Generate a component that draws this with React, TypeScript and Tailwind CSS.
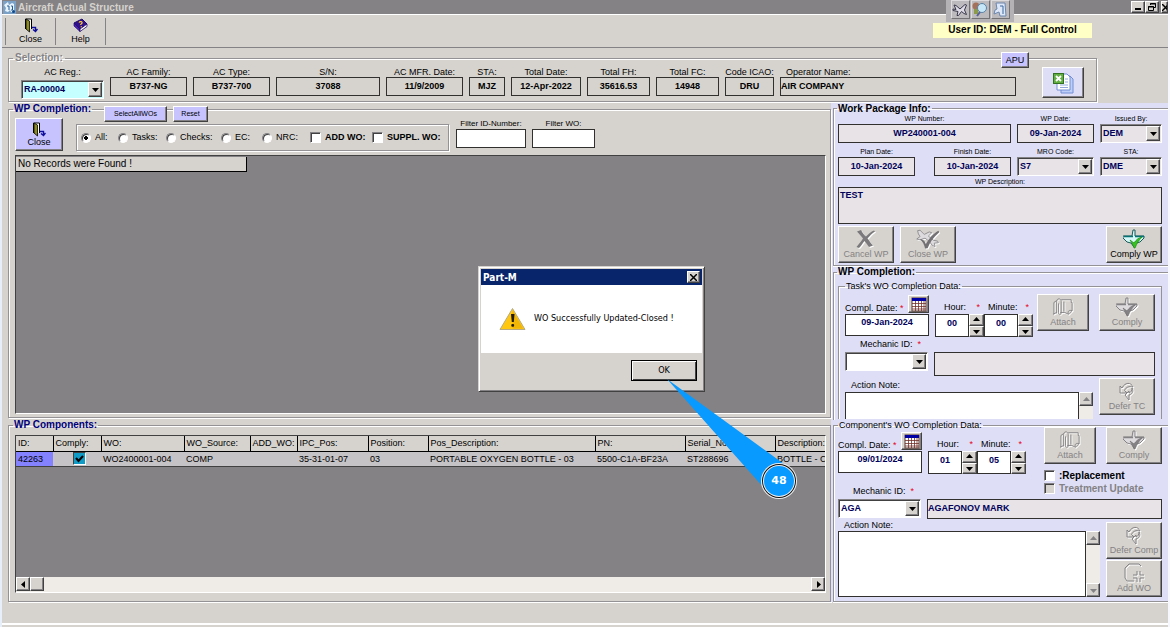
import type { ReactNode } from 'react';
import clsx from 'clsx';

const raised =
    'border border-t-white border-l-white border-b-[#424142] border-r-[#424142] shadow-[inset_-1px_-1px_0_#848284]';
const etched = 'border border-[#949294] shadow-[1px_1px_0_#fff,inset_1px_1px_0_#fff]';

/* ---------- icons ---------- */

function DoorIcon() {
    return (
        <svg width="14" height="15" viewBox="0 0 14 15" aria-hidden="true">
            <path d="M1.500 11V1h6v10" fill="#fff" stroke="#000" />
            <path d="M2 1l3.500 2v11L2 11z" fill="#8c8a21" stroke="#000" strokeWidth=".8" />
            <path d="M8 9.500h3.500V13M9 11.500l2.500 2 2-2.500" fill="none" stroke="#10109c" strokeWidth="1.400" />
        </svg>
    );
}

function BookIcon() {
    return (
        <svg width="16" height="15" viewBox="0 0 16 15" aria-hidden="true">
            <path d="M1 5l8-4 5 5-7 5z" fill="#31108c" stroke="#21086b" />
            <path d="M1 5v3l6 5.500v-2.500z" fill="#4a20b5" stroke="#21086b" strokeWidth=".7" />
            <path d="M7 11l7-5v2.500L7 13.500z" fill="#fff" stroke="#21086b" strokeWidth=".8" />
            <path d="M6 4.500c1-1.500 3.500-1 3 .5-.3.800-1.500.7-1.300 2M8.300 8.300v1" fill="none" stroke="#ffce31" strokeWidth="1.300" />
        </svg>
    );
}

function CalendarIcon() {
    return (
        <svg width="16" height="15" viewBox="0 0 16 15" aria-hidden="true">
            <rect x="1" y="1" width="14" height="13" fill="#fff" stroke="#5a3831" />
            <rect x="1" y="1" width="14" height="3" fill="#0000a5" />
            <path d="M1 6.500h14M1 9.500h14M1 12h14M4.500 4v10M7.500 4v10M10.500 4v10M13 4v10" stroke="#733029" strokeWidth=".8" />
        </svg>
    );
}

function CrossIcon() {
    return (
        <svg width="22" height="20" viewBox="0 0 22 20" className="drop-shadow-[1px_1px_0_#fff]" aria-hidden="true">
            <path d="M2 2.500L6 1c1.500 3 3 5 5 6.500 2.500-2.500 5-5 8-6l1 1c-3 2-5.500 4.500-7.500 7 2 2.500 3.500 5 5.500 7l-4 1.500c-1.500-2-3-4-4.500-6-2 2.500-3.500 5-5.500 7L1.500 18C4 15 6 12.500 8 9.500 6 7 4 5 2 2.500z" fill="#7b797b" />
        </svg>
    );
}

function PlaneCheckIcon() {
    return (
        <svg width="28" height="22" viewBox="0 0 29 24" className="drop-shadow-[1px_1px_0_#fff]" aria-hidden="true">
            <path d="M2 2l3-.5 5 5 6-3 3 1-4 4 6 5 5 1 1 2-5 .5 1 4-3-1-4-5-5-4-6 2-4-1 4-3-2-3z" fill="#dedbde" stroke="#848284" />
            <path d="M6 12l4 2 2 4c4-7 8-12 15-16l1 2C21 10 17 16 14 23l-3 .5C10 19 8 15 5 13z" fill="#737173" />
        </svg>
    );
}

function ComplyIcon({ active }: { active?: boolean }) {
    return (
        <svg width="22" height="20" viewBox="0 0 22 20" className={active ? '' : 'drop-shadow-[1px_1px_0_#fff]'} aria-hidden="true">
            <path d="M10 1h2v6h9v2l-4 4-4 1-2 4-3-4-4-1-4-4V7h9z" fill={active ? '#d6f7f7' : '#dedbde'} stroke={active ? '#18595a' : '#848284'} />
            <path d="M1 7.500h9M12 7.500h9" stroke={active ? '#087173' : '#848284'} strokeWidth="1.500" />
            <path d="M7 11l4 3c2-3 4-5 8-6-3 3-5 6-7 11h-1c-1-3-2-5-4-8z" fill={active ? '#39c321' : '#848284'} stroke={active ? '#188a10' : '#737173'} strokeWidth=".7" />
        </svg>
    );
}

function AttachIcon() {
    return (
        <svg width="24" height="22" viewBox="0 0 24 22" className="drop-shadow-[1px_1px_0_#fff]" aria-hidden="true">
            <g fill="none" stroke="#848284">
                <path d="M10 3h11v3h1v9l-4 4-4-2H9" />
                <path d="M1 19l4-2M2 19V6l3-2M5 18V5c0-4 5-4 5 0v12c0 3-3 3-3 0V7M13 5v11" />
                <path d="M18 19c-1-3 0-5 4-4" />
            </g>
        </svg>
    );
}

function DeferIcon() {
    return (
        <svg width="18" height="20" viewBox="0 0 18 20" className="drop-shadow-[1px_1px_0_#fff]" aria-hidden="true">
            <g fill="none" stroke="#848284">
                <path d="M2 5v7h7L6.500 9.500C8 6 11 5 15 6c-2-5-8-5-11 1z" />
                <path d="M14 7c2 3 0 6-3 7v5l-4-5 4-4v2c2-1 3-2 3-5z" />
            </g>
        </svg>
    );
}

function AddPageIcon() {
    return (
        <svg width="22" height="20" viewBox="0 0 22 20" className="drop-shadow-[1px_1px_0_#fff]" aria-hidden="true">
            <g fill="none" stroke="#848284">
                <path d="M11 18H4l-2-3V5l4-4h10l2 2" />
                <path d="M14 8v4h-4M10 15h4v4M17 19v-4h4M21 12h-4V8" />
            </g>
        </svg>
    );
}

function ExcelIcon() {
    return (
        <svg width="22" height="22" viewBox="0 0 22 22" aria-hidden="true">
            <path d="M9 4h9l3 3v14H9z" fill="#bdcff7" stroke="#738ed6" />
            <path d="M5 2h10l3 3v13H5z" fill="#fff" stroke="#738ed6" />
            <path d="M8 13h8M8 15.500h8M13 7h3M13 10h3" stroke="#94aade" />
            <rect x="1.500" y="1.500" width="10" height="10" fill="#63ae42" stroke="#31711f" />
            <path d="M4 4l5 5M9 4L4 9" stroke="#fff" strokeWidth="1.800" />
        </svg>
    );
}

function AppIcon() {
    return (
        <svg width="13" height="13" viewBox="0 0 13 13" aria-hidden="true">
            <rect width="13" height="13" fill="#7ba2c6" />
            <path d="M1 4l4-3 1 3 3-2 2 1v8H8l-1-2-2 2-3-1 1-3z" fill="#e7f3ff" />
            <path d="M4 5h2v4M8 5h1.500v4H8" stroke="#215a94" fill="none" />
            <circle cx="10.500" cy="10.500" r="1.500" fill="#104a8c" />
        </svg>
    );
}

function WarningIcon() {
    return (
        <svg width="27" height="24" viewBox="0 0 27 24" aria-hidden="true">
            <path d="M13.500 1.500L26 22.500H1z" fill="#ffc710" stroke="#b5aa84" strokeLinejoin="round" />
            <path d="M13.500 3L24 21.500H13.500z" fill="#e7aa00" opacity=".6" />
            <path d="M12 7h3.500l-.7 8h-2z" fill="#211c10" />
            <rect x="12.300" y="17" width="2.800" height="2.800" rx="1" fill="#211c10" />
        </svg>
    );
}

/* ---------- controls ---------- */

type FieldProps = {
    label: string;
    value: string;
    className?: string;
    small?: boolean;
    align?: 'left' | 'center';
    tone?: string;
};

function Field({ label, value, className, small, align = 'center', tone = 'bg-[#d6d3ce] text-black' }: FieldProps) {
    return (
        <label className={clsx('flex min-w-0 flex-col', className)}>
            <span className={clsx('leading-[10px] whitespace-nowrap', small ? 'text-[7px]' : 'text-[9px]', align === 'left' ? 'pl-[6px] text-left' : 'text-center')}>
                {label}
            </span>
            <input
                readOnly
                defaultValue={value}
                className={clsx('h-[19px] w-full border border-[#31302f] pb-[2px] text-[9px] font-bold outline-none', align === 'center' ? 'text-center' : 'text-left', tone)}
            />
        </label>
    );
}

function Arrow({ dir }: { dir: 'up' | 'down' | 'left' | 'right' }) {
    const points = {
        up: '0,5 7,5 3.5,1',
        down: '0,2 7,2 3.5,6',
        left: '5,0 5,7 1,3.5',
        right: '2,0 2,7 6,3.5',
    };
    return (
        <svg width="7" height="7" viewBox="0 0 7 7" fill="currentColor" aria-hidden="true">
            <polygon points={points[dir]} />
        </svg>
    );
}

function Combo({ id, value, className, tone = 'bg-white' }: { id: string; value: string; className?: string; tone?: string }) {
    return (
        <div className={clsx('flex h-[19px] border border-[#848284] border-r-white border-b-white p-px shadow-[inset_1px_1px_0_#424142]', tone, className)}>
            <select id={id} defaultValue={value} className="w-0 flex-1 appearance-none bg-transparent pl-px text-[9px] font-bold text-[#00005a] outline-none">
                <option>{value}</option>
            </select>
            <span className={clsx('pointer-events-none flex w-[14px] items-center justify-center bg-[#d6d3ce]', raised)}>
                <Arrow dir="down" />
            </span>
        </div>
    );
}

function ComboField({ id, label, value, className }: { id: string; label: string; value: string; className?: string }) {
    return (
        <div className={clsx('flex flex-col', className)}>
            <label htmlFor={id} className="text-center text-[7px] leading-[10px]">{label}</label>
            <Combo id={id} value={value} tone="bg-[#e7e3e7]" />
        </div>
    );
}

function ToolButton({ icon, label, className, disabled = true }: { icon: ReactNode; label: string; className?: string; disabled?: boolean }) {
    return (
        <button
            type="button"
            disabled={disabled}
            className={clsx('flex h-[37px] flex-col items-center justify-between bg-[#d6d3ce] pt-[2px] pb-[2px] text-[9px] leading-[11px] whitespace-nowrap', raised, disabled ? 'text-[#848284]' : 'text-black', className ?? 'w-14')}
        >
            {icon}
            {label}
        </button>
    );
}

function Spinner({ label, value }: { label: string; value: string }) {
    return (
        <div className="flex h-[23px]">
            <input aria-label={label} defaultValue={value} className="w-[34px] border border-[#31302f] bg-white pb-[4px] text-center text-[9px] font-bold text-[#00005a] outline-none" />
            <div className="flex w-[15px] flex-col text-black">
                <button type="button" aria-label={label + ' up'} className={clsx('flex flex-1 items-center justify-center bg-[#d6d3ce]', raised)}><Arrow dir="up" /></button>
                <button type="button" aria-label={label + ' down'} className={clsx('flex flex-1 items-center justify-center bg-[#d6d3ce]', raised)}><Arrow dir="down" /></button>
            </div>
        </div>
    );
}

function Star() {
    return <span className="text-[#e70021]">*</span>;
}

// Date, hour and minute inputs shared by both completion forms
function CompletionTime({ id, date, hour, minute }: { id: string; date: string; hour: string; minute: string }) {
    return (
        <div className="flex items-start text-[9px] leading-[11px]">
            <div className="mr-[6px] w-[84px]">
                <div className="flex h-[20px] items-end justify-between">
                    <label htmlFor={id} className="whitespace-nowrap">Compl. Date: <Star /></label>
                    <button type="button" aria-label="Pick date" className={clsx('mb-px flex h-[18px] w-[21px] items-center justify-center bg-[#d6d3ce]', raised)}>
                        <CalendarIcon />
                    </button>
                </div>
                <input id={id} defaultValue={date} className="h-[22px] w-full border border-[#31302f] bg-white pb-[6px] text-center text-[9px] font-bold text-[#00005a] outline-none" />
            </div>
            <div className="w-[49px]">
                <div className="flex h-[20px] items-end justify-between pb-px pl-[9px] pr-[4px]"><span>Hour:</span><Star /></div>
                <Spinner label="Hour" value={hour} />
            </div>
            <div className="w-[49px]">
                <div className="flex h-[20px] items-end justify-between pb-px pl-[4px] pr-[4px]"><span>Minute:</span><Star /></div>
                <Spinner label="Minute" value={minute} />
            </div>
        </div>
    );
}

function ScrollButton({ dir }: { dir: 'up' | 'down' | 'left' | 'right' }) {
    return (
        <button type="button" aria-label={'Scroll ' + dir} className={clsx('flex h-[14px] w-[14px] shrink-0 items-center justify-center bg-[#d6d3ce]', raised, (dir === 'up' || dir === 'down') && 'text-[#848284]')}>
            <Arrow dir={dir} />
        </button>
    );
}

/* ---------- sections ---------- */

function TitleBar() {
    return (
        <header className="flex h-[14px] items-center bg-[#848284] pl-px text-[10px] font-bold text-[#d6d3ce]">
            <AppIcon />
            <h1 className="flex-1 pl-[2px] leading-[13px]">Aircraft Actual Structure</h1>
            <div className="flex overflow-hidden text-black">
                <button type="button" aria-label="Minimize" className={clsx('flex h-3 w-[14px] items-end justify-center bg-[#d6d3ce] pb-[2px]', raised)}>
                    <svg width="6" height="2" aria-hidden="true"><rect width="6" height="2" /></svg>
                </button>
                <button type="button" aria-label="Restore" className={clsx('flex h-3 w-[14px] items-center justify-center bg-[#d6d3ce]', raised)}>
                    <svg width="8" height="8" viewBox="0 0 8 8" fill="none" stroke="#000" aria-hidden="true"><path d="M2.500 2V.5h5v4H6M2 1h6M.5 3.500h5v4h-5zM0 4h6" /></svg>
                </button>
                <button type="button" aria-label="Close window" className={clsx('ml-[2px] flex h-3 w-[7px] items-center overflow-hidden bg-[#d6d3ce]', raised)}>
                    <svg width="7" height="7" viewBox="0 0 7 7" stroke="#000" strokeWidth="1.500" className="shrink-0" aria-hidden="true"><path d="M0 0l7 7M7 0L0 7" /></svg>
                </button>
            </div>
        </header>
    );
}

function Toolbar() {
    return (
        <nav className="flex h-[34px] items-center border-t border-b border-t-white border-b-[#848284] pl-[3px] text-[9px] leading-[12px]">
            <button type="button" className="flex h-[27px] w-[50px] flex-col items-center border-l border-[#848284]"><DoorIcon />Close</button>
            <button type="button" className="flex h-[27px] w-[51px] flex-col items-center border-x border-[#848284]"><BookIcon />Help</button>
        </nav>
    );
}

function QuickTools() {
    const button = 'flex h-[19px] w-[19px] items-center justify-center border border-[#dedbde] border-r-[#737173] border-b-[#737173] bg-[#bdbabd]';
    return (
        <div className="absolute top-0 right-[154px] flex h-[22px] w-[68px] justify-center gap-px bg-[#b5b2b5]">
            <button type="button" aria-label="Aircraft" className={button}>
                <svg width="16" height="15" viewBox="0 0 16 15" aria-hidden="true">
                    <path d="M2 3l2 .5 4 3.500 5-4.500 1.500.5-2 5 2 4.500-2.500-1-2.500-2-3 4H5l1-4-5-1V7l3 .5z" fill="#dedbe7" stroke="#39384a" />
                </svg>
            </button>
            <button type="button" aria-label="Search" className={button}>
                <svg width="16" height="15" viewBox="0 0 16 15" aria-hidden="true">
                    <circle cx="4" cy="4" r="3.500" fill="#a5715a" /><rect x="2" y="7" width="4" height="5" fill="#8c9a4a" />
                    <circle cx="10" cy="6" r="4.500" fill="#c6e7f7" stroke="#5a82a5" /><path d="M8 10l-3 4" stroke="#5a6194" strokeWidth="2" />
                </svg>
            </button>
            <button type="button" aria-label="Structure" className={button}>
                <svg width="14" height="15" viewBox="0 0 14 15" aria-hidden="true"><path d="M3 1h9l1 13H7l-1-4-5 2 1-4 2-1z" fill="#dee7f7" stroke="#6b86ad" /><path d="M7 4h3v6M9 11h2" stroke="#39699c" fill="none" /></svg>
            </button>
        </div>
    );
}

const aircraft = [
    { label: 'AC Family:', value: 'B737-NG', width: 'w-[77px]' },
    { label: 'AC Type:', value: 'B737-700', width: 'w-[77px]' },
    { label: 'S/N:', value: '37088', width: 'w-[104px]' },
    { label: 'AC MFR. Date:', value: '11/9/2009', width: 'w-[77px]' },
    { label: 'STA:', value: 'MJZ', width: 'w-[36px]' },
    { label: 'Total Date:', value: '12-Apr-2022', width: 'w-[70px]' },
    { label: 'Total FH:', value: '35616.53', width: 'w-[63px]' },
    { label: 'Total FC:', value: '14948', width: 'w-[63px]' },
    { label: 'Code ICAO:', value: 'DRU', width: 'w-[49px]' },
];

function Selection() {
    return (
        <div className="relative mt-1 mr-[71px] ml-[6px]">
            <fieldset className={clsx('h-[50px] min-w-0', etched)}>
                <legend className="ml-1 px-[2px] text-[10px] leading-3 font-bold text-[#848284] [text-shadow:1px_1px_0_#fff]">Selection:</legend>
                <div className="flex items-start gap-[6px] pt-[3px] pl-3">
                    <div className="flex w-[83px] flex-col gap-[3px]">
                        <label htmlFor="ac-reg" className="text-center text-[9px] leading-[10px]">AC Reg.:</label>
                        <Combo id="ac-reg" value="RA-00004" tone="bg-[#c6ffff]" />
                    </div>
                    {aircraft.map((f) => (
                        <Field key={f.label} label={f.label} value={f.value} className={f.width} />
                    ))}
                    <Field label="Operator Name:" value="AIR COMPANY" align="left" className="flex-1" />
                    <button type="button" aria-label="Export to Excel" className={clsx('mr-3 ml-[20px] flex h-[31px] w-[42px] items-center justify-center bg-[#dedff7]', raised)}>
                        <ExcelIcon />
                    </button>
                </div>
            </fieldset>
            <button type="button" className={clsx('absolute top-0 right-[68px] h-4 w-7 bg-[#c6c3ff] text-[9px] leading-3', raised)}>APU</button>
        </div>
    );
}

const checkbox = 'h-[11px] w-[11px] shrink-0 appearance-none border border-[#848284] border-r-white border-b-white shadow-[inset_1px_1px_0_#424142]';

const kinds = [
    { name: 'All:', width: 'w-[37px]' },
    { name: 'Tasks:', width: 'w-[48px]' },
    { name: 'Checks:', width: 'w-[55px]' },
    { name: 'EC:', width: 'w-[41px]' },
    { name: 'NRC:', width: 'w-[48px]' },
];

function WorkOrders() {
    return (
        <div className="relative">
            <fieldset className={clsx('min-w-0 pr-1 pb-[3px] pl-[6px]', etched)}>
                <legend className="-ml-[2px] px-px text-[10px] leading-3 font-bold text-[#00007b]">WP Completion:</legend>
                <div className="flex h-10 items-start pt-[3px]">
                    <button type="button" className={clsx('mr-[13px] flex h-[33px] w-[48px] flex-col items-center justify-center bg-[#c6c3ff] text-[9px] leading-[11px]', raised)}>
                        <DoorIcon />Close
                    </button>
                    <div className={clsx('mt-[6px] mr-[7px] flex h-[27px] w-[373px] items-center pl-[4px] text-[9px] whitespace-nowrap', etched)}>
                        {kinds.map((k, i) => (
                            <label key={k.name} className={clsx('flex items-center gap-[4px]', k.width)}>
                                <input type="radio" name="wo-kind" defaultChecked={i === 0} className="h-[10px] w-[10px] shrink-0 appearance-none rounded-full border border-[#848284] border-r-white border-b-white bg-white shadow-[inset_1px_1px_0_#424142] checked:bg-[radial-gradient(circle,#000_2px,#fff_2px)]" />
                                {k.name}
                            </label>
                        ))}
                        <label className="flex w-[62px] items-center gap-[4px] font-bold">
                            <input type="checkbox" className={clsx(checkbox, 'bg-white')} />
                            ADD WO:
                        </label>
                        <label className="flex items-center gap-[4px] font-bold">
                            <input type="checkbox" className={clsx(checkbox, 'bg-white')} />
                            SUPPL. WO:
                        </label>
                    </div>
                    <label className="mr-[6px] flex w-[70px] flex-col text-center text-[8px] leading-[11px] whitespace-nowrap">
                        Filter ID-Number:
                        <input className="h-[19px] w-full border border-[#31302f] bg-white" />
                    </label>
                    <label className="flex w-[63px] flex-col text-center text-[8px] leading-[11px] whitespace-nowrap">
                        Filter WO:
                        <input className="h-[19px] w-full border border-[#31302f] bg-white" />
                    </label>
                </div>
                <div className="h-[259px] border border-t-[#424142] border-r-white border-b-white border-l-[#424142] bg-[#848284] pt-px">
                    <p className="h-[15px] w-[231px] border-r border-b border-black bg-[#d6d3ce] pl-[2px] text-[10px] leading-[14px]">No Records were Found !</p>
                </div>
            </fieldset>
            <div className="absolute top-[3px] left-[96px] flex gap-[6px] text-[7px] leading-3">
                <button type="button" className={clsx('h-4 w-[63px] bg-[#c6c3ff]', raised)}>SelectAllWOs</button>
                <button type="button" className={clsx('h-4 w-[35px] bg-[#c6c3ff]', raised)}>Reset</button>
            </div>
        </div>
    );
}

const columns = [
    { title: 'ID:', value: '42263', width: 'w-[37px]' },
    { title: 'Comply:', value: '', width: 'w-[48px]' },
    { title: 'WO:', value: 'WO2400001-004', width: 'w-[83px]' },
    { title: 'WO_Source:', value: 'COMP', width: 'w-[66px]' },
    { title: 'ADD_WO:', value: '', width: 'w-[47px]' },
    { title: 'IPC_Pos:', value: '35-31-01-07', width: 'w-[71px]' },
    { title: 'Position:', value: '03', width: 'w-[60px]' },
    { title: 'Pos_Description:', value: 'PORTABLE OXYGEN BOTTLE - 03', width: 'w-[167px]' },
    { title: 'PN:', value: '5500-C1A-BF23A', width: 'w-[90px]' },
    { title: 'Serial_No:', value: 'ST288696', width: 'w-[90px]' },
    { title: 'Description:', value: 'BOTTLE - C', width: '' },
];

function Components() {
    return (
        <fieldset className={clsx('mt-px min-w-0 pr-1 pb-2 pl-[6px]', etched)}>
            <legend className="-ml-[2px] px-px text-[10px] leading-3 font-bold text-[#00007b]">WP Components:</legend>
            <div className="mt-1 flex h-[158px] flex-col justify-between border border-t-[#424142] border-r-white border-b-white border-l-[#424142] bg-[#848284]">
                <table className="w-full table-fixed border-collapse text-left text-[9px] leading-[14px] whitespace-nowrap">
                    <thead>
                        <tr>
                            {columns.map((c) => (
                                <th key={c.title} className={clsx('h-[15px] overflow-hidden border-r border-b border-black bg-[#d6d3ce] pl-[2px] font-normal last:border-r-0', c.width)}>{c.title}</th>
                            ))}
                        </tr>
                    </thead>
                    <tbody>
                        <tr className="bg-[#c6c3c6]">
                            {columns.map((c, i) => (
                                <td key={c.title} className={clsx('h-[15px] overflow-hidden border-b border-[#424142] pl-[2px]', i === 0 && 'bg-[#8482ff]')}>
                                    {c.title === 'Comply:' ? (
                                        <span className="flex items-center justify-center">
                                            <input type="checkbox" aria-label="Comply" defaultChecked className="peer h-[13px] w-[13px] appearance-none border border-[#424142] border-r-white border-b-white bg-[#109ac6]" />
                                            <svg width="9" height="8" viewBox="0 0 9 8" className="pointer-events-none -ml-[11px] hidden peer-checked:block" aria-hidden="true">
                                                <path d="M1 3l2.500 3L8 1" fill="none" stroke="#000" strokeWidth="2" />
                                            </svg>
                                        </span>
                                    ) : c.value}
                                </td>
                            ))}
                        </tr>
                    </tbody>
                </table>
                <div className="flex h-[15px] bg-[#efebe7]">
                    <ScrollButton dir="left" />
                    <div className={clsx('h-[14px] w-[14px] bg-[#d6d3ce]', raised)} />
                    <div className="flex-1" />
                    <ScrollButton dir="right" />
                </div>
            </div>
        </fieldset>
    );
}

const infoTone = 'bg-[#e7e3e7] text-[#00005a]';

function WorkPackageInfo() {
    return (
        <fieldset className="min-w-0 border border-r-0 border-[#949294] pr-[6px] pb-[2px] pl-1 shadow-[0_1px_0_#fff,inset_1px_1px_0_#fff]">
            <legend className="-ml-px px-px text-[10px] leading-[11px] font-bold">Work Package Info:</legend>
            <div className="flex gap-[6px]">
                <Field small label="WP Number:" value="WP240001-004" className="flex-1" tone={infoTone} />
                <Field small label="WP Date:" value="09-Jan-2024" className="w-[77px]" tone={infoTone} />
                <ComboField id="issued-by" label="Issued By:" value="DEM" className="w-[62px]" />
            </div>
            <div className="mt-1 flex gap-[6px]">
                <div className="flex flex-1 justify-between">
                    <Field small label="Plan Date:" value="10-Jan-2024" className="w-[77px]" tone={infoTone} />
                    <Field small label="Finish Date:" value="10-Jan-2024" className="w-[77px]" tone={infoTone} />
                </div>
                <ComboField id="mro-code" label="MRO Code:" value="S7" className="w-[77px]" />
                <ComboField id="wp-sta" label="STA:" value="DME" className="w-[62px]" />
            </div>
            <label htmlFor="wp-desc" className="mt-px block text-center text-[7px] leading-[10px]">WP Description:</label>
            <textarea id="wp-desc" readOnly defaultValue="TEST" className="block h-[37px] w-full resize-none border border-[#31302f] bg-[#e7e3e7] px-px text-[9px] leading-[14px] font-bold text-[#00005a]" />
            <div className="mt-[2px] flex gap-[6px]">
                <ToolButton icon={<CrossIcon />} label="Cancel WP" />
                <ToolButton icon={<PlaneCheckIcon />} label="Close WP" />
                <ToolButton icon={<ComplyIcon active />} label="Comply WP" disabled={false} className="ml-auto w-14" />
            </div>
        </fieldset>
    );
}

function TaskCompletion() {
    return (
        <fieldset className="h-[154px] min-w-0 border border-r-0 border-b-0 border-[#949294] pr-[6px] pl-1 shadow-[inset_1px_1px_0_#fff]">
            <legend className="-ml-px px-px text-[10px] leading-3 font-bold">WP Completion:</legend>
            <fieldset className="mt-[2px] h-[139px] min-w-0 overflow-hidden border border-b-0 border-[#949294] pr-[6px] pl-[6px] shadow-[inset_1px_1px_0_#fff]">
                <legend className="px-px text-[9px] leading-3">Task's WO Completion Data:</legend>
                <div className="flex justify-between pt-[2px]">
                    <CompletionTime id="task-date" date="09-Jan-2024" hour="00" minute="00" />
                    <div className="flex gap-[10px]">
                        <ToolButton icon={<AttachIcon />} label="Attach" className="w-[52px]" />
                        <ToolButton icon={<ComplyIcon />} label="Comply" />
                    </div>
                </div>
                <label htmlFor="task-mech" className="mt-[2px] block h-[13px] pl-[15px] text-[9px] leading-[11px]">Mechanic ID: &nbsp;<Star /></label>
                <div className="flex items-start gap-[6px]">
                    <Combo id="task-mech" value="" className="w-[83px]" />
                    <input aria-label="Task mechanic name" readOnly className="h-[24px] w-0 flex-1 border border-[#31302f] bg-[#e7e3e7]" />
                </div>
                <div className="mt-[2px] flex gap-[6px]">
                    <div className="flex-1">
                        <label htmlFor="task-note" className="block pl-[6px] text-[9px] leading-[14px]">Action Note:</label>
                        <div className="flex bg-[#efebe7]">
                            <textarea id="task-note" className="block h-[38px] w-0 flex-1 resize-none border border-[#31302f] bg-white text-[9px]" />
                            <ScrollButton dir="up" />
                        </div>
                    </div>
                    <ToolButton icon={<DeferIcon />} label="Defer TC" />
                </div>
            </fieldset>
        </fieldset>
    );
}

function ComponentCompletion() {
    return (
        <fieldset className="min-w-0 border border-r-0 border-[#949294] pr-[6px] pb-1 pl-1 shadow-[0_1px_0_#fff,inset_1px_1px_0_#fff]">
            <legend className="px-px text-[9px] leading-[11px]">Component's WO Completion Data:</legend>
            <div className="flex h-[68px] justify-between">
                <div>
                    <CompletionTime id="comp-date" date="09/01/2024" hour="01" minute="05" />
                    <label htmlFor="comp-mech" className="mt-3 block pl-[15px] text-[9px] leading-[11px]">Mechanic ID: &nbsp;<Star /></label>
                </div>
                <div className="-mt-1 w-[118px] text-[10px] leading-3 font-bold">
                    <div className="mb-[5px] flex justify-between font-normal">
                        <ToolButton icon={<AttachIcon />} label="Attach" className="w-[52px]" />
                        <ToolButton icon={<ComplyIcon />} label="Comply" />
                    </div>
                    <label className="flex h-[13px] items-center gap-1">
                        <input type="checkbox" className={clsx(checkbox, 'bg-white')} />
                        :Replacement
                    </label>
                    <label className="flex h-[13px] items-center gap-1 text-[#848284]">
                        <input type="checkbox" disabled className={clsx(checkbox, 'bg-[#d6d3ce]')} />
                        Treatment Update
                    </label>
                </div>
            </div>
            <div className="flex gap-[6px]">
                <Combo id="comp-mech" value="AGA" className="w-[83px]" />
                <input aria-label="Component mechanic name" readOnly defaultValue="AGAFONOV MARK" className="h-[20px] w-0 flex-1 border border-[#31302f] bg-[#e7e3e7] pb-[3px] text-[9px] font-bold text-[#00005a]" />
            </div>
            <div className="mt-px flex gap-[6px]">
                <div className="flex-1">
                    <label htmlFor="comp-note" className="block pl-[6px] text-[9px] leading-[11px]">Action Note:</label>
                    <div className="flex bg-[#efebe7]">
                        <textarea id="comp-note" className="block h-[66px] w-0 flex-1 resize-none border border-[#31302f] bg-white text-[9px]" />
                        <div className="flex flex-col justify-between">
                            <ScrollButton dir="up" />
                            <ScrollButton dir="down" />
                        </div>
                    </div>
                </div>
                <div className="flex flex-col justify-end gap-px">
                    <ToolButton icon={<DeferIcon />} label="Defer Comp" />
                    <ToolButton icon={<AddPageIcon />} label="Add WO" />
                </div>
            </div>
        </fieldset>
    );
}

function MessageDialog() {
    return (
        <div role="dialog" aria-label="Part-M" className="absolute top-[266px] left-[476px] w-[227px] border border-[#d6d3ce] border-r-[#424142] border-b-[#424142] bg-[#d6d3ce] p-[2px] font-['DejaVu_Sans_Condensed','DejaVu_Sans',sans-serif] text-[9px] shadow-[inset_1px_1px_0_#fff,inset_-1px_-1px_0_#848284]">
            <div className="flex h-4 items-center justify-between bg-[#08246b] px-[2px] text-[10px] font-bold text-white">
                Part-M
                <button type="button" aria-label="Close dialog" className={clsx('flex h-3 w-[13px] items-center justify-center bg-[#d6d3ce]', raised)}>
                    <svg width="7" height="7" viewBox="0 0 7 7" stroke="#000" strokeWidth="1.500" aria-hidden="true"><path d="M0 0l7 7M7 0L0 7" /></svg>
                </button>
            </div>
            <div className="flex h-[68px] items-center gap-2 bg-white pl-[18px] whitespace-nowrap">
                <WarningIcon />
                <p>WO Successfully Updated-Closed !</p>
            </div>
            <div className="flex h-[36px] items-start justify-end pt-[7px] pr-[5px]">
                <button type="button" className="h-[21px] w-[66px] border border-black bg-[#d6d3ce] shadow-[inset_1px_1px_0_#fff,inset_-1px_-1px_0_#424142]">OK</button>
            </div>
        </div>
    );
}

function StepCallout() {
    return (
        <div className="pointer-events-none absolute top-[379px] left-[665px] h-[121px] w-[132px]">
            <svg width="132" height="121" viewBox="0 0 132 121" aria-hidden="true">
                <path d="M0 0L117 85 98 110z" fill="#089aff" />
                <circle cx="112" cy="102" r="18" fill="#efefef" />
                <circle cx="112" cy="102" r="17" fill="#101010" />
                <circle cx="112" cy="102" r="16" fill="#efefef" />
                <circle cx="112" cy="102" r="15" fill="#089aff" />
            </svg>
            <span className="absolute right-0 bottom-[11px] w-10 text-center font-['DejaVu_Sans',sans-serif] text-[11px] leading-4 font-bold text-white">48</span>
        </div>
    );
}

export default function App() {
    return (
        <div className="min-h-screen bg-white font-['Liberation_Sans',Arial,sans-serif] text-black">
            <div className="relative border-r-2 border-l-2 border-r-[#f7f7ff] border-l-[#e7effa] bg-[#d6d3ce]">
                <TitleBar />
                <Toolbar />
                <QuickTools />
                <p className="absolute top-[23px] right-[76px] h-[15px] w-[159px] bg-[#ffffc6] text-center text-[10px] leading-[14px] font-bold">User ID: DEM - Full Control</p>
                <Selection />
                <main className="mt-px flex">
                    <div className="min-w-0 flex-1 pl-[6px]">
                        <WorkOrders />
                        <Components />
                    </div>
                    <aside className="w-[337px] shrink-0 bg-[#dedff7] pl-[2px]">
                        <WorkPackageInfo />
                        <TaskCompletion />
                        <ComponentCompletion />
                    </aside>
                </main>
                <footer className="flex h-[25px] flex-col justify-end">
                    <div className="h-[4px] border-t-2 border-white" />
                </footer>
                <MessageDialog />
                <StepCallout />
            </div>
        </div>
    );
}
